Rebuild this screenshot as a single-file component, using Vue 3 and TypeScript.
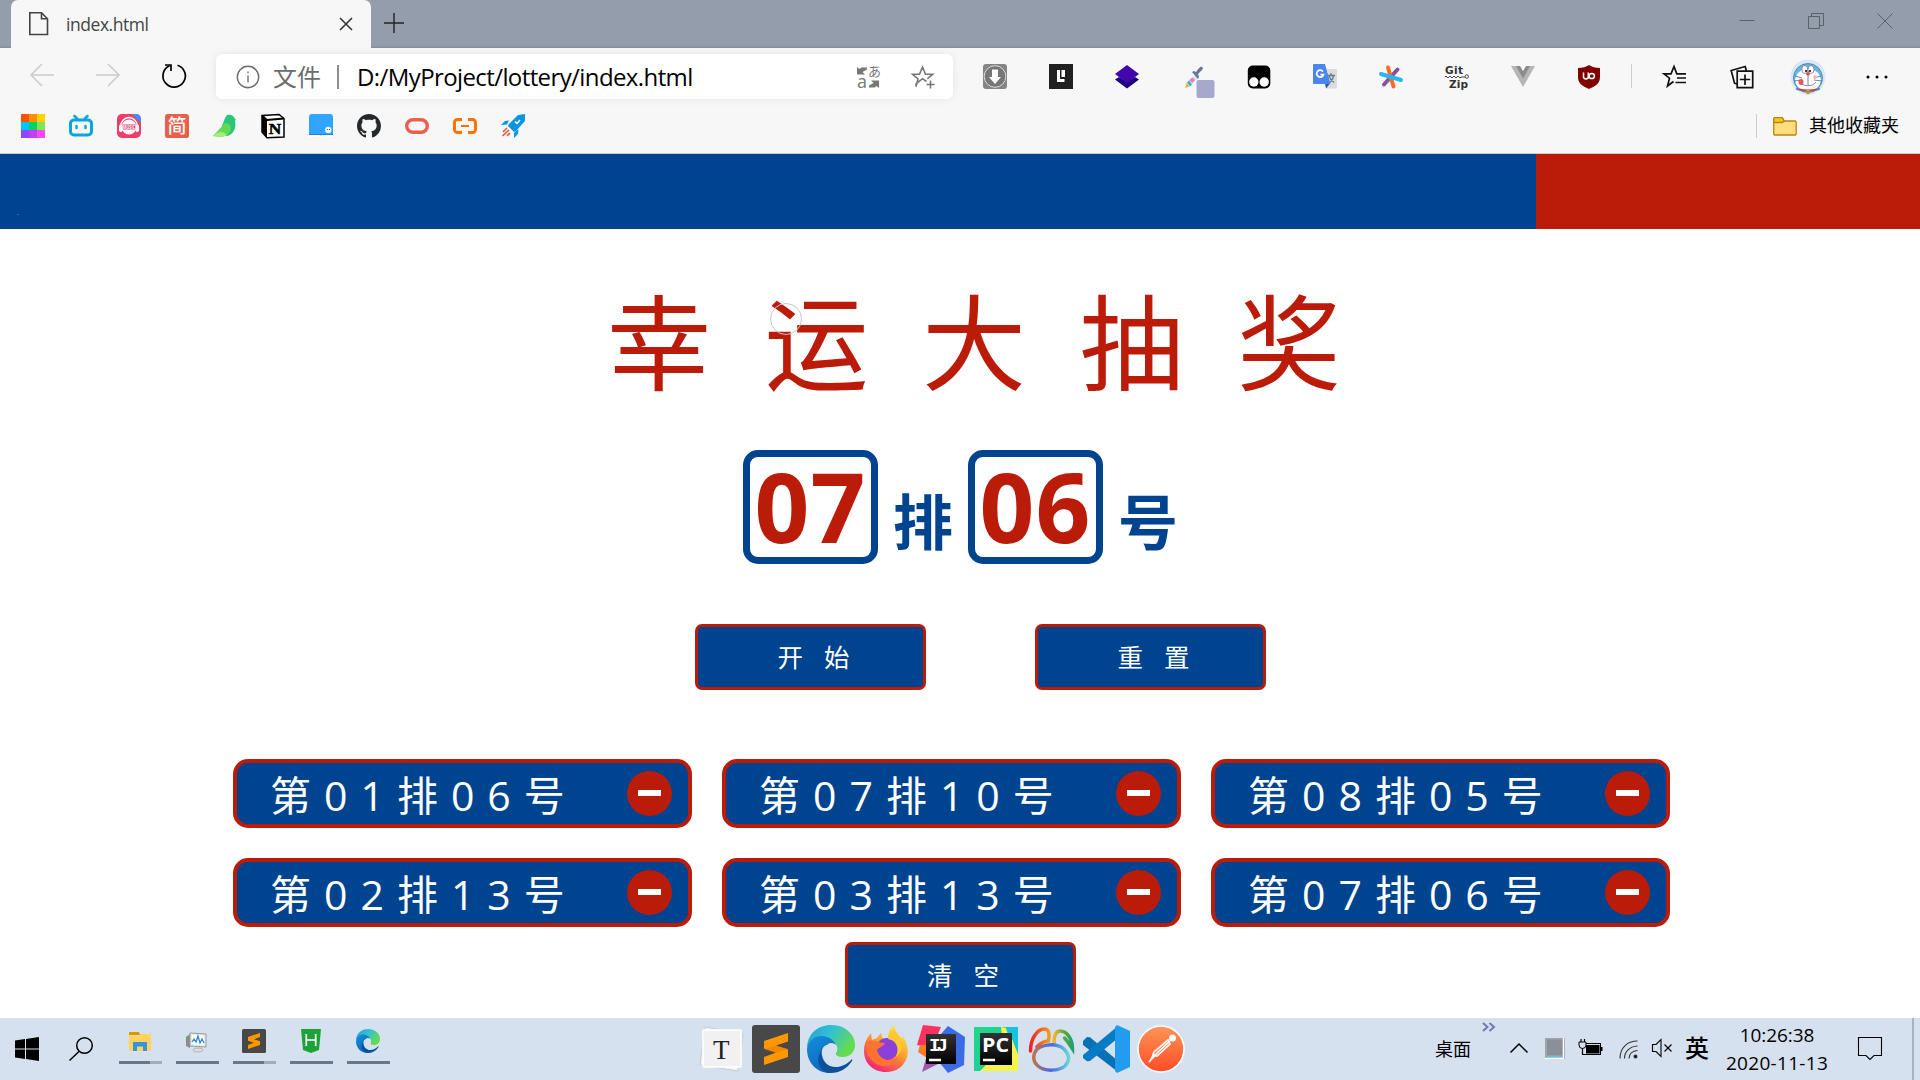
<script setup lang="ts">
import { ref } from 'vue'

interface Seat {
  row: string
  num: string
}

const row = ref('07')
const num = ref('06')
const winners = ref<Seat[]>([
  { row: '01', num: '06' },
  { row: '07', num: '10' },
  { row: '08', num: '05' },
  { row: '02', num: '13' },
  { row: '03', num: '13' },
  { row: '07', num: '06' },
])

const remove = (i: number) => winners.value.splice(i, 1)
const clear = () => (winners.value = [])
</script>

<template>
  <div class="screen">
    <header class="tabs">
      <div class="tab">
        <svg class="tab-doc" width="22" height="26" viewBox="0 0 22 26" fill="none" stroke="#444" stroke-width="1.6"><path d="M1.8 1.8h11.7l6 6v15.7H1.8z" /><path d="M13.5 1.8v6h6" /></svg>
        <span class="tab-name">index.html</span>
        <svg width="14" height="14" viewBox="0 0 14 14" stroke="#333" stroke-width="1.6"><path d="M1 1l12 12M13 1L1 13" /></svg>
      </div>
      <svg class="plus" width="20" height="20" viewBox="0 0 20 20" stroke="#222" stroke-width="1.4"><path d="M10 0v20M0 10h20" /></svg>
      <div class="winctl">
        <svg width="16" height="16" viewBox="0 0 16 16" stroke="#596069" fill="none"><path d="M.5 7.5h15" /></svg>
        <svg width="16" height="16" viewBox="0 0 16 16" stroke="#596069" fill="none"><path d="M.5 3.500h11v12H.5zM3.500 3.500v-3h12v12h-4" /></svg>
        <svg width="16" height="16" viewBox="0 0 16 16" stroke="#596069" fill="none"><path d="M.5 .5l15 15M15.500 .5l-15 15" /></svg>
      </div>
    </header>

    <div class="toolbar">
      <div class="navs">
        <svg width="24" height="24" viewBox="0 0 24 24" stroke="#ccc" stroke-width="1.5" fill="none"><path d="M24 12H1M12 1L1 12l11 11" /></svg>
        <svg width="24" height="24" viewBox="0 0 24 24" stroke="#ccc" stroke-width="1.5" fill="none"><path d="M0 12h23M12 1l11 11-11 11" /></svg>
        <svg class="reload" width="26" height="26" viewBox="0 0 26 26" stroke="#000" stroke-width="1.700" fill="none"><path d="M16.500 2.200a11.200 11.200 0 1 1-8 .5" /><path d="M4 2h6v6" /></svg>
      </div>
      <div class="address">
        <svg class="info" width="24" height="24" viewBox="0 0 24 24" stroke="#6c6c6c" stroke-width="1.4" fill="none"><circle cx="12" cy="12" r="10.700" /><path d="M12 10.500v7M12 6.500v1.700" /></svg>
        <span class="scheme">文件</span>
        <i class="bar"></i>
        <span class="url">D:/MyProject/lottery/index.html</span>
        <svg class="trans" width="24" height="26" viewBox="0 0 24 26" fill="#777"><text x="11" y="12" font-size="13" font-family="Noto Sans CJK SC, sans-serif">あ</text><text x="0" y="24" font-size="18" font-family="Open Sans, sans-serif">a</text><path d="M0 3l2.500 2 2-1.500H10v2L5.500 8 8 10.500H0zM22 24l-2.500-2-2 1.500H12v-2l4.500-2.500L14 16.500h8z" /></svg>
        <svg class="star" width="24" height="24" viewBox="0 0 24 24" fill="none" stroke="#777" stroke-width="1.6"><path d="M15.500 16.500l-4-2.800-6.500 5.300L5 21.500l2-7.500L1.500 9.200h7L11.500 2l3 7.200h7.200l-5.400 4.600M19.500 15.500v8M15.500 19.500h8" /></svg>
      </div>
      <div class="exts">
        <span><svg width="24" height="25" viewBox="0 0 24 25"><rect width="24" height="25" rx="3" fill="#858585" /><circle cx="12" cy="12.500" r="10.800" fill="#777" stroke="#ddd" /><path d="M9 5.500h6V13h3l-6 7-6-7h3z" fill="#fff" /></svg></span>
        <span><svg width="24" height="25" viewBox="0 0 24 25"><rect width="24" height="25" fill="#202020" /><path d="M8 6h3v9h4.500v3H8zM12.500 6H16v7h-3.500z" fill="#fff" /></svg></span>
        <span><svg width="24" height="24" viewBox="0 0 24 24"><path d="M0 14.500L4 12l8 5 8-5 4 2.500-12 9z" fill="#1d0080" /><path d="M12 0l12 9-12 9L0 9z" fill="#4306ac" /></svg></span>
        <span><svg class="dropper" width="30" height="31" viewBox="0 0 30 31"><path d="M1 20l2-6 7-6 3 3-7 7z" fill="#dde1e8" /><path d="M2 15.500l2-2 3 4-2 2z" fill="#30b7c9" /><path d="M4.500 13l3-2.500 2.500 2.500-3 3z" fill="#e67bbd" /><path d="M0 21l1.500-5 3 3.500z" fill="#ffac3e" /><path d="M7 5l2-1 2 1 3-4c3-3 5 0 3 2l-4 4 1 3-1 2z" fill="#637b92" /><rect x="11.500" y="13" width="18" height="18" rx="2" fill="#a5a9cc" /></svg></span>
        <span><svg width="24" height="24" viewBox="0 0 24 24"><rect x=".8" y=".5" width="22.500" height="23" rx="5" fill="#000" /><circle cx="6.800" cy="17" r="4.700" fill="#fff" /><circle cx="17.200" cy="17" r="4.700" fill="#fff" /></svg></span>
        <span><svg width="24" height="25" viewBox="0 0 24 25"><path d="M12 5h12v19.500H14z" fill="#dcdcdc" /><path d="M14 11.500h8M18 9v2.500M20.500 12c-1 4-3 6-5 7M16 12c1 3 3 5 5 6.500" stroke="#667b83" fill="none" stroke-width="1.300" /><path d="M12 19.500h5l-4 5z" fill="#3350b5" /><path d="M1 0h11l5.500 20H1a1 1 0 0 1-1-1V1a1 1 0 0 1 1-1z" fill="#4b86ef" /><path d="M10 7.500a3.500 3.500 0 1 0 .5 3.200H7.500" fill="none" stroke="#fff" stroke-width="1.700" /></svg></span>
        <span><svg width="24" height="24" viewBox="0 0 24 24" stroke-width="4" stroke-linecap="round"><path d="M5 19.500L18.500 4.500" stroke="#8a4fa3" /><path d="M9 2.500l5.500 19" stroke="#fb6a26" /><path d="M2 9l20 6" stroke="#28b6f1" /></svg></span>
        <span><svg width="24" height="26" viewBox="0 0 24 26" fill="#333"><text x="0" y="9.500" font-size="10.500" font-weight="700" font-family="DejaVu Sans, sans-serif" textLength="18">Git</text><path d="M0 13q1-2 2 0t2 0 2 0 2 0 2 0 2 0 2 0 2 0h4" fill="none" stroke="#444" /><circle cx="21.800" cy="12.500" r="1.700" fill="none" stroke="#444" /><text x="4" y="23.500" font-size="10.500" font-weight="700" font-family="DejaVu Sans, sans-serif" textLength="19">Zip</text></svg></span>
        <span><svg width="24" height="22" viewBox="0 0 24 22"><path d="M0 0h24L12 21z" fill="#b6b6b6" /><path d="M5 0h14l-7 12.500z" fill="#8c8c8c" /><path d="M9 0h6l-3 5z" fill="#f7f7f7" /></svg></span>
        <span><svg width="22" height="24" viewBox="0 0 22 24"><path d="M11 0c3 2 6 3 11 3v9c0 6-4 9-11 12C4 21 0 18 0 12V3c5 0 8-1 11-3z" fill="#800000" /><path d="M5.500 7.500v4a2.400 2.400 0 0 0 4.800 0v-4M10.300 13.800v-6" fill="none" stroke="#fff" stroke-width="1.500" /><circle cx="13.800" cy="11" r="2.600" fill="none" stroke="#fff" stroke-width="1.500" /></svg></span>
      </div>
      <i class="sep"></i>
      <div class="tools">
        <span><svg width="24" height="24" viewBox="0 0 24 24" fill="none" stroke="#111" stroke-width="1.700"><path d="M10.500 16.500L4.500 21l2-7.800L1 8.800h7L11 1.500l2.800 7.300H23M14 13h9M12.500 17.500H23" /></svg></span>
        <span><svg width="24" height="24" viewBox="0 0 24 24" fill="none" stroke="#111" stroke-width="1.700"><path d="M7.200 6.200h15.500v16.500H7.200zM15 9.500v10.500M9.800 14.500h10.400M7 19l-2.500-.8L1.200 5.500l14-4 1.200 4.500" /></svg></span>
        <span><svg width="36" height="36" viewBox="0 0 36 36"><circle cx="18" cy="18" r="17.500" fill="#d8e8fa" /><path d="M7 31l2-3M29 31l-2-3" stroke="#3b8ed0" stroke-width="3" /><circle cx="18" cy="19" r="14.500" fill="#65b7e5" stroke="#49799b" stroke-width=".8" /><ellipse cx="18" cy="21" rx="12.800" ry="11" fill="#fff" /><ellipse cx="14.800" cy="10.500" rx="3" ry="4" fill="#fff" stroke="#667" stroke-width=".7" /><ellipse cx="21" cy="10.500" rx="3" ry="4" fill="#fff" stroke="#667" stroke-width=".7" /><circle cx="16" cy="12" r="1" /><circle cx="20" cy="12" r="1" /><circle cx="18" cy="15" r="1.800" fill="#d94150" /><path d="M18 17v9M10 23c3 5 13 5 16 0M5 17l7 2M4 22l8-1M31 17l-7 2M32 22l-8-1" stroke="#567" stroke-width=".8" fill="none" /><ellipse cx="11" cy="23" rx="2.500" ry="3" fill="#e65465" /><circle cx="25" cy="18" r="2" fill="#f5b7c4" /><path d="M9 30.500q9 2 18 0" stroke="#cf3e4d" stroke-width="2" fill="none" /><circle cx="18" cy="33" r="2.300" fill="#b69745" /></svg></span>
        <span class="dots"><svg width="24" height="4" viewBox="0 0 24 4"><circle cx="3" cy="2" r="1.500" /><circle cx="12" cy="2" r="1.500" /><circle cx="21" cy="2" r="1.500" /></svg></span>
      </div>
    </div>

    <div class="bookmarks">
      <div class="marks">
        <svg viewBox="0 0 24 24"><path d="M0 0h8v8H0z" fill="#ff5200" /><path d="M8 0h8v8H8z" fill="#ff9100" /><path d="M16 0h8v8h-8z" fill="#ffd200" /><path d="M0 8h8v8H0z" fill="#00c3ff" /><path d="M8 8h8v8H8z" fill="#00d364" /><path d="M16 8h8v8h-8z" fill="#80e550" /><path d="M0 16h8v8H0z" fill="#8b49ff" /><path d="M8 16h8v8H8z" fill="#c63bf8" /><path d="M16 16h8v8h-8z" fill="#ff45f8" /></svg>
        <svg viewBox="0 0 24 24" fill="none" stroke="#08a5df" stroke-linecap="round"><rect x="1.500" y="6" width="21" height="15" rx="3.500" stroke-width="3" /><path d="M5.500 2l3 3M18.500 2l-3 3" stroke-width="2.500" /><path d="M7.500 12v2M16.500 12v2" stroke-width="2.500" /></svg>
        <svg viewBox="0 0 24 24"><rect width="24" height="24" rx="5" fill="#ee3d69" /><path d="M15 0h4a5 5 0 0 1 5 5v4z" fill="#3c92ee" /><circle cx="12" cy="13" r="7.500" fill="#fff" /><path d="M3.500 13a8.500 9.500 0 0 1 17 0" fill="none" stroke="#fff" stroke-width="1.300" /><path d="M5.500 10.500h13v5h-13z" fill="#ee3d69" /><rect x="2" y="10.500" width="3.500" height="7.500" rx="1.700" fill="#fff" /><rect x="18.500" y="10.500" width="3.500" height="7.500" rx="1.700" fill="#fff" /><text x="6" y="14.800" font-size="4.600" font-weight="700" font-family="Open Sans, sans-serif" fill="#fff" textLength="12" lengthAdjust="spacingAndGlyphs">MUSIC</text></svg>
        <svg viewBox="0 0 24 24"><rect width="24" height="24" rx="2.500" fill="#e8604b" /><text x="2.500" y="19" font-size="19" font-weight="500" font-family="Noto Sans CJK SC, sans-serif" fill="#fff">简</text></svg>
        <svg viewBox="0 0 24 24"><path d="M12 4l2-3c4-1 7 1 8 4h1l-1 2c2 8-3 15-9 15L9 12z" fill="#2bc779" /><path d="M0 22L12 9c7 1 7 7 4 10-4 5-10 4-16 3z" fill="#62d957" /><path d="M0 22c5-4 8-6 14-1-4 2-8 2-14 1z" fill="#a6ec72" /></svg>
        <svg viewBox="0 0 24 24"><path d="M1 1.500L18 .5l5 4V23l-17 .8L1 18z" fill="#fff" stroke="#000" stroke-width="1.500" /><path d="M1 1.500L6 6v17.500L1 18z" fill="#000" /><path d="M1 1.500L6 6l17-1.500" fill="none" stroke="#000" stroke-width="1.800" /><text x="7.800" y="20.300" font-size="15.500" font-weight="700" font-family="Liberation Serif, serif" textLength="12.500" lengthAdjust="spacingAndGlyphs" stroke="#000" stroke-width=".5">N</text></svg>
        <svg viewBox="0 0 24 24"><path d="M3 0h18a3 3 0 0 1 3 3v18H0V3a3 3 0 0 1 3-3z" fill="#30a4ff" /><path d="M0 20h24v1H13l-1 1-1-1H0z" fill="#1384ec" /><path d="M0 21h11l1 1 1-1h11v2H0z" fill="#fff" /><circle cx="19.300" cy="16" r="3.200" fill="#e6f5ff" /><path d="M18 15.500h1M20 15.500h1" stroke="#276da9" /></svg>
        <svg viewBox="0 0 16 16" fill="#24292e"><path d="M8 0C3.580 0 0 3.580 0 8c0 3.540 2.290 6.530 5.470 7.590.4.070.55-.17.55-.38 0-.19-.01-.82-.01-1.490-2.010.37-2.530-.49-2.690-.94-.09-.23-.48-.94-.82-1.130-.28-.15-.68-.52-.01-.53.63-.01 1.080.58 1.230.82.72 1.210 1.870.87 2.330.66.070-.52.28-.87.51-1.070-1.780-.2-3.640-.89-3.640-3.950 0-.87.31-1.590.82-2.150-.08-.2-.36-1.020.08-2.120 0 0 .67-.21 2.200.82.64-.18 1.320-.27 2-.27s1.360.09 2 .27c1.530-1.040 2.200-.82 2.200-.82.44 1.100.16 1.920.08 2.120.51.56.82 1.270.82 2.150 0 3.070-1.870 3.750-3.650 3.950.29.25.54.73.54 1.480 0 1.070-.01 1.930-.01 2.200 0 .21.15.46.55.38A8.010 8.010 0 0 0 16 8c0-4.420-3.580-8-8-8z" /></svg>
        <svg viewBox="0 0 24 24"><rect x="1.700" y="5.700" width="20.600" height="12.600" rx="6.300" fill="none" stroke="#ee5c4b" stroke-width="3.400" /></svg>
        <svg viewBox="0 0 24 24" fill="none" stroke="#ff7200" stroke-width="3"><path d="M9 5.500H4.500a3 3 0 0 0-3 3v7a3 3 0 0 0 3 3H9M15 5.500h4.500a3 3 0 0 1 3 3v7a3 3 0 0 1-3 3H15" /><path d="M8 12h8" stroke-width="2" /></svg>
        <svg viewBox="0 0 24 24"><path d="M24 0v7l-9 10-2 1-6-6 1-2 9-9z" fill="#0a96dd" /><path d="M0 11l4-4 4-.5-2 4zM13 24l4-4 .5-5-4.500 4z" fill="#0a96dd" /><path d="M14 7.500l2 2 3-3.500" fill="none" stroke="#fff" stroke-width="1.500" /><path d="M2 18l4-4M1.500 22l6.500-6M6 22l3-3" stroke="#f25335" stroke-width="1.600" /></svg>
      </div>
      <div class="other">
        <svg width="24" height="19" viewBox="0 0 24 19" stroke="#b8860b" stroke-width="1.300"><path d="M.7 17V2.200A1.500 1.500 0 0 1 2.200.7h7l2 3.300h10.500a1.500 1.500 0 0 1 1.500 1.500V17a1 1 0 0 1-1 1H1.700a1 1 0 0 1-1-1z" fill="#ffdd7d" /><path d="M.7 5.500V2.200A1.500 1.500 0 0 1 2.200.7h7l2 3.300-2 1.500z" fill="#f9c429" /></svg>
        <span>其他收藏夹</span>
      </div>
    </div>

    <main class="page">
      <div class="banner"><i class="speck"></i></div>
      <h1 class="title">幸运大抽奖<i class="ring"></i></h1>
      <div class="draw">
        <b class="box">{{ row }}</b><b class="unit">排</b><b class="box">{{ num }}</b><b class="unit">号</b>
      </div>
      <div class="actions">
        <button>开始</button>
        <button>重置</button>
      </div>
      <ul class="winners">
        <li v-for="(w, i) in winners" :key="i">
          <span>第{{ w.row }}排{{ w.num }}号</span>
          <i class="del" @click="remove(i)"></i>
        </li>
      </ul>
      <button class="clear" @click="clear">清空</button>
    </main>

    <footer class="taskbar">
      <svg class="win" width="24" height="24" viewBox="0 0 24 24"><path d="M0 3.500L10 2v9.500H0zM11 1.900L24 0v11.500H11zM0 12.500h10V22L0 20.500zM11 12.500h13V24l-13-1.900z" /></svg>
      <svg class="search" width="24" height="24" viewBox="0 0 24 24" fill="none" stroke="#000" stroke-width="1.500"><circle cx="15.500" cy="8.500" r="7.800" /><path d="M10 14.500L.5 23.500" /></svg>
      <div class="running">
        <span class="multi"><svg width="24" height="24" viewBox="0 0 24 24"><path d="M1 3h10l1 3H1z" fill="#dc9500" /><path d="M1 6.500h10l2-1.500h10v17H1z" fill="#ffd35d" /><path d="M5 22v-9h14v9h-4v-4.500H9V22z" fill="#3593df" /></svg></span>
        <span><svg width="24" height="24" viewBox="0 0 24 24"><path d="M1 8l4-3v14l-4-2z" fill="#888d90" /><path d="M5 4l16 1v13L5 17z" fill="#ececec" stroke="#999" /><path d="M7 6l12 1v9L7 15z" fill="#fff" /><path d="M7 13l2-3 2 3 2-6 2 7 2-4 2 4" stroke="#2f8cd1" stroke-width="1.300" fill="none" /><ellipse cx="13" cy="21" rx="5" ry="2" fill="#ddd" stroke="#999" stroke-width=".6" /><path d="M1.500 9h2" stroke="#48bd27" stroke-width="2" /></svg></span>
        <span class="multi"><svg width="24" height="24" viewBox="0 0 48 48"><rect width="48" height="48" rx="3" fill="#484848" /><path d="M12 16l24-8v8l-12 4.500 12 4v7.500l-24 8v-8l12-4.500-12-4z" fill="#ff9800" /></svg></span>
        <span><svg width="24" height="24" viewBox="0 0 24 24"><path d="M2 0h20l-2 21-8 3-8-3z" fill="#1da239" /><path d="M7.300 5v12M16.700 5v12M7.300 11h9.400" stroke="#fff" stroke-width="1.700" /></svg></span>
        <span><svg width="24" height="24" viewBox="0 0 48 48"><use href="#edge" /></svg></span>
      </div>
      <div class="dock">
        <svg viewBox="0 0 48 48"><path d="M8 2l38 7-5 37-38-6z" fill="#f3f3f3" stroke="#c5cbd0" /><rect x="6" y="5" width="38" height="37" rx="1" fill="#f1f1f1" stroke="#fff" stroke-width="1.500" /><text x="16" y="34" font-size="27" font-family="Liberation Serif, serif" fill="#222">T</text></svg>
        <svg viewBox="0 0 48 48"><rect width="48" height="48" rx="3" fill="#484848" /><path d="M12 16l24-8v8.500l-12 4 12 4v7.500l-24 8v-8l12-4.500-12-4z" fill="#ff9800" /><path d="M12 24l12 4 12-4-12-3.500z" fill="#e87f00" opacity=".6" /></svg>
        <svg viewBox="0 0 48 48">
          <defs>
            <linearGradient id="eg" x1="0" y1="0" x2="1" y2=".5"><stop offset="0" stop-color="#249edc" /><stop offset=".5" stop-color="#34c1cf" /><stop offset="1" stop-color="#65dc4d" /></linearGradient>
            <linearGradient id="eb" x1="0" y1="0" x2=".5" y2="1"><stop offset="0" stop-color="#178ed8" /><stop offset="1" stop-color="#0868bf" /></linearGradient>
            <linearGradient id="ff" x1=".8" y1="0" x2=".2" y2="1"><stop offset="0" stop-color="#fff24a" /><stop offset=".45" stop-color="#ff9b2c" /><stop offset="1" stop-color="#f2147c" /></linearGradient>
            <linearGradient id="pc" x1="0" y1="0" x2="1" y2="1"><stop offset="0" stop-color="#21d789" /><stop offset="1" stop-color="#19cba0" /></linearGradient>
            <linearGradient id="pm" x1="0" y1="0" x2="0" y2="1"><stop offset="0" stop-color="#ff9556" /><stop offset="1" stop-color="#ff4c27" /></linearGradient>
            <linearGradient id="na" x1="0" y1="0" x2="1" y2="0"><stop offset="0" stop-color="#e8252a" /><stop offset="1" stop-color="#f19a1d" /></linearGradient>
            <linearGradient id="nb" x1="0" y1="0" x2="1" y2="0"><stop offset="0" stop-color="#f3b52f" /><stop offset=".6" stop-color="#4ca83c" /><stop offset="1" stop-color="#259e72" /></linearGradient>
            <linearGradient id="nc" x1="0" y1="0" x2="1" y2="0"><stop offset="0" stop-color="#bd744b" /><stop offset=".5" stop-color="#4668ef" /><stop offset="1" stop-color="#67d6d5" /></linearGradient>
            <linearGradient id="bk" x1="0" y1="0" x2="0" y2="1"><stop offset="0" stop-color="#333" /><stop offset="1" stop-color="#000" /></linearGradient>
            <g id="edge">
              <path d="M0 24C0 6 14 0 24 0c16 0 24 11 24 20 0 8-6 12-12 12-5 0-8-2-7-4 4-7-2-12-8-12C9 12 1 16 0 24z" fill="url(#eg)" />
              <path d="M0 24c1-9 8-13 14-13 8 0 15 5 15 11-8-6-16 0-14 8 2 10 10 13 15 13l-7 5C10 48 0 38 0 24z" fill="url(#eb)" />
              <path d="M20 17c-8 5-8 20 3 24 8 3 16-1 21-6 1-1 2 0 1 1-5 8-13 12-21 12-12-1-15-12-11-20 1-5 4-9 7-11z" fill="#104f9b" />
              <path d="M29 28c3-4 1-10-5-10-4 0-6 5-4 10 1 3 3 5 6 6 3 1 7 1 10 0-5 0-8-3-7-6z" fill="#d5e1ee" />
            </g>
          </defs>
          <use href="#edge" />
        </svg>
        <svg viewBox="0 0 48 48"><path d="M2 26C2 18 5 13 9 8l1 7 5-2 4-5 2 6 5 1c0-7 2-12 6-15 1 7 5 10 8 14l1-3c4 7 6 15 4 21-3 10-11 15-21 15C11 47 2 38 2 26z" fill="url(#ff)" /><circle cx="25" cy="24" r="11" fill="#8d3fd9" /><path d="M4 18c5-5 11 0 19 0-2 4-6 4-8 7 2 10 14 13 21 7-3 9-15 12-23 6C5 33 4 25 4 18z" fill="#ff722f" /><path d="M26 14c8 1 12 9 8 18 7-5 8-14 4-20l-6-7c-3 2-5 5-6 9z" fill="#ffc832" /></svg>
        <svg viewBox="0 0 48 48"><path d="M6 0l18 2-9 21-15-3z" fill="#ff315e" /><path d="M24 9l7-8 17 11-1 28-16 8-9-11z" fill="#3b6ce5" /><path d="M3 20l10 0v15L1 27z" fill="#f67b28" /><path d="M10 30L5 47l18-9z" fill="#a556aa" /><rect x="9" y="9" width="30" height="30" fill="url(#bk)" /><text x="12" y="26" font-size="19" font-weight="700" font-family="Liberation Mono, monospace" fill="#fff" textLength="19">IJ</text><path d="M12 35h12" stroke="#fff" stroke-width="2.500" /></svg>
        <svg viewBox="0 0 48 48"><rect x="2" y="2" width="44" height="44" fill="url(#pc)" /><path d="M36 2h10v32L30 12z" fill="#12c4dd" /><path d="M29 2l5 1 4 13-8-4zM40 14l6 15v17H8l8-8z" fill="#f4f44c" /><rect x="8" y="8" width="32" height="32" fill="url(#bk)" /><text x="10" y="27" font-size="20" font-weight="700" font-family="Open Sans, sans-serif" fill="#fff" textLength="27" lengthAdjust="spacingAndGlyphs">PC</text><path d="M11 35h12" stroke="#fff" stroke-width="2.500" /></svg>
        <svg viewBox="0 0 48 48" fill="none" stroke-width="3.500" stroke-linecap="round"><path d="M3.500 26C3.500 14 10 4 17.500 4c4.500 0 5.500 5 4 12-5 0-8 2-11.500 6" stroke="url(#na)" /><path d="M27 18c0-7 2-12 6-12 7 0 12.500 8 12.500 18-2-3-5-8-8-11" stroke="url(#nb)" /><path d="M10 24c7-5 20-6 27 0 6 6 6 12 1 17-6 5-20 6-27 0-6-5-5-12-1-17z" stroke="url(#nc)" /></svg>
        <svg viewBox="0 0 48 48"><path d="M1 16l4-4 3 .3L36 36v11L1 20z" fill="#0870b7" /><path d="M1 30L36 1v12L8 36l-3 .2L1 33z" fill="#087bc5" /><path d="M35 0l13 6v36l-13 6-2-2V2z" fill="#229cef" /></svg>
        <svg viewBox="0 0 48 48"><circle cx="24" cy="24" r="23" fill="url(#pm)" stroke="#fff" stroke-width="1.600" /><circle cx="35.500" cy="13" r="3.500" fill="#fff" /><path d="M33 16L20 28l-8 9M31 15L17 27l-1 3 4 1 13-12z" stroke="#fff" stroke-width="1.700" fill="none" /><path d="M16 29l3 2-8 7z" fill="#fff" /></svg>
      </div>
      <div class="tray">
        <span class="desk">桌面</span>
        <svg class="more" width="14" height="10" viewBox="0 0 14 10" fill="none" stroke="#7478b4" stroke-width="2"><path d="M1 1l4.500 4L1 9M7.500 1L12 5 7.500 9" /></svg>
        <svg class="up" width="18" height="10" viewBox="0 0 18 10" fill="none" stroke="#000" stroke-width="1.500"><path d="M.5 9.500L9 1l8.500 8.500" /></svg>
        <svg class="pad" width="20" height="21" viewBox="0 0 20 21"><rect width="20" height="21" fill="#a1a5ab" /><rect x="2" y="1.500" width="15" height="16" fill="#8b9098" /><path d="M2 18.500h15" stroke="#5fc0f2" stroke-width="1.500" /><path d="M0 20.300h18.500V0" stroke="#fff" stroke-width="1.300" fill="none" /></svg>
        <svg class="batt" width="24" height="17" viewBox="0 0 24 17"><rect x="3.500" y="4.500" width="18" height="11" fill="none" stroke="#000" /><rect x="7" y="6" width="13.500" height="8.500" /><path d="M22.500 8v4" stroke="#000" stroke-width="2" /><path d="M0 3h7v3a3 3 0 0 1-7 0z" fill="#d5e1ee" stroke="#000" /><path d="M2 0v3M5.500 0v3M3.500 9v6.500" stroke="#000" stroke-width="1.200" /></svg>
        <svg class="wifi" width="20" height="19" viewBox="0 0 20 19" fill="none" stroke="#333" stroke-width="1.100"><path d="M1 18.500C1 8 8 1 18.500 1M5.500 18.500c0-7 5-12 13-12.500M10 18.500C10 14 13.500 11 18.500 10.500" /><circle cx="16.500" cy="16.500" r="1.500" fill="#000" /></svg>
        <svg class="vol" width="20" height="18" viewBox="0 0 20 18" fill="none" stroke="#000" stroke-width="1.100"><path d="M.5 5.500h3.500l5-5v17l-5-5H.5zM12.500 5.500l7 7M19.500 5.500l-7 7" /></svg>
        <span class="lang">英</span>
        <div class="clock"><span>10:26:38</span><span class="date">2020-11-13</span></div>
        <svg class="note" width="25" height="24" viewBox="0 0 25 24" fill="none" stroke="#000" stroke-width="1.100"><path d="M.5 .5h23v18h-7.500l-4 4-4-4H.5z" /></svg>
        <i class="edge-line"></i>
      </div>
    </footer>
  </div>
</template>

<style>
body { margin: 0; overflow: hidden; }
</style>

<style scoped>
.screen { width: 1920px; height: 1080px; display: flex; flex-direction: column; background: #fff; overflow: hidden; font-family: "Open Sans", "Noto Sans CJK SC", sans-serif; color: #000; }
.screen * { box-sizing: border-box; }
svg { display: block; flex: none; overflow: visible; }
i { display: block; }

.tabs { height: 48px; flex: none; display: flex; background: #949dac; box-shadow: inset 0 -2px 2px -1px #838b9a; }
.tab { width: 360px; height: 48px; margin-left: 11px; border-radius: 7px 7px 0 0; background: #f7f7f7; display: flex; align-items: center; padding: 0 18px 0 17px; }
.tab-name { flex: 1; margin-left: 16px; font-size: 17.500px; line-height: 24px; margin-top: -1px; color: #444; letter-spacing: -.45px; white-space: nowrap; }
.plus { margin: 13px 0 0 13px; }
.winctl { margin: 13px 27px 0 auto; display: flex; gap: 53px; }

.toolbar { height: 58px; flex: none; display: flex; background: #f7f7f7; }
.navs { width: 216px; display: flex; gap: 42px; padding: 15px 0 0 30px; }
.reload { margin-left: -1px; }
.address { width: 737px; height: 45px; margin-top: 6px; border-radius: 6px; background: #fff; box-shadow: 0 0 8px rgba(0, 0, 0, .08); display: flex; align-items: center; padding-left: 20px; }
.scheme { margin-left: 13px; width: 48px; font-size: 24px; line-height: 36px; color: #6c6c6c; }
.bar { width: 2px; height: 24px; margin-left: 16px; background: #8c8c8c; }
.url { margin-left: 18px; width: 500px; font-size: 24px; line-height: 36px; letter-spacing: -.6px; white-space: nowrap; }
.star { margin-left: 30px; }
.exts { display: flex; margin-left: 9px; height: 58px; }
.exts span { width: 66px; height: 57px; display: flex; align-items: center; justify-content: center; }
.dropper { margin: 12px 0 0 13px; }
.sep { width: 1px; height: 24px; margin: 16px 0 0 9px; background: #ccc; }
.tools { display: flex; margin-left: 10px; }
.tools span { width: 66.500px; height: 57px; display: flex; align-items: center; justify-content: center; }
.tools .dots { width: 70px; }

.bookmarks { height: 48px; flex: none; display: flex; justify-content: space-between; background: #f7f7f7; border-bottom: 1px solid #ccc; }
.marks { display: flex; gap: 24px; padding: 8px 0 0 21px; }
.marks svg { width: 24px; height: 24px; }
.other { display: flex; align-items: center; gap: 12px; height: 24px; margin: 8px 21px 0 0; padding-left: 16px; border-left: 1px solid #ccc; font-size: 18px; }
.other span { line-height: 24px; margin-top: -2px; }

.page { height: 864px; flex: none; display: flex; flex-direction: column; align-items: center; }
.banner { width: 100%; height: 75px; flex: none; background: linear-gradient(90deg, #004490 80%, #bb1b09 80%); }
.speck { width: 2px; height: 1px; margin: 60px 0 0 17px; background: #3a6ca8; }
.title { position: relative; margin: 54px 0 0 82px; height: 120px; width: 788px; font-size: 104px; font-weight: 400; line-height: 120px; letter-spacing: 53.500px; color: #bb1b09; white-space: nowrap; }
.ring { position: absolute; left: 163px; top: 20px; width: 32px; height: 32px; border: 1px solid #c8c4d4; border-radius: 50%; }
.draw { display: flex; align-items: flex-start; margin: 47px 0 0 2px; width: 436px; height: 114px; }
.box { width: 135px; height: 114px; flex: none; border: 7px solid #004490; border-radius: 15px; color: #bb1b09; font-size: 96px; line-height: 98px; text-align: center; letter-spacing: 1px; }
.unit { width: 90px; flex: none; padding-left: 15px; color: #004490; font-size: 60px; line-height: 76px; margin-top: 34px; }
.actions { display: flex; gap: 109px; margin: 60px 0 0 41px; }
button { width: 231px; height: 66px; flex: none; padding: 0 0 0 27px; border: 3px solid #bb1b09; border-radius: 7px; background: #004490; color: #fff; font-family: inherit; font-size: 25.500px; line-height: 60px; letter-spacing: 21px; }
.winners { list-style: none; margin: 69px 17px 0 0; padding: 0; display: grid; grid-template-columns: repeat(3, 459px); grid-auto-rows: 69px; gap: 30px; }
.winners li { display: flex; align-items: center; justify-content: space-between; padding: 0 16px 0 33px; border: 4px solid #bb1b09; border-radius: 15px; background: #004490; color: #fff; font-size: 41px; line-height: 60px; letter-spacing: 13px; white-space: nowrap; }
.winners span { margin-top: 2px; }
.del { width: 45px; height: 45px; border-radius: 50%; background: #bb1b09; display: flex; justify-content: center; padding-top: 19px; }
.del::before { content: ""; width: 23px; height: 6px; background: #fff; }
.clear { margin-top: 15px; }

.taskbar { position: relative; height: 62px; flex: none; display: flex; background: #d5e1ee; }
.win { margin: 19px 0 0 15px; }
.search { margin: 19px 0 0 30px; }
.running { display: flex; gap: 14px; margin-left: 26px; width: 271px; }
.running span { width: 43px; height: 46px; padding: 11px 0 0 9px; border-bottom: 3px solid #687889; }
.running .multi { border-bottom: 0; background: linear-gradient(90deg, #687889 31px, #a3adb8 31px) bottom / 100% 3px no-repeat; }
.dock { display: flex; gap: 7px; margin: 7px 0 0 307px; }
.dock svg { width: 48px; height: 48px; }
.tray { display: flex; width: 485px; margin-left: auto; }
.desk { width: 36px; margin-top: 18px; font-size: 18px; line-height: 26px; }
.more { margin: 4px 0 0 11px; }
.up { margin: 25px 0 0 14px; }
.pad { margin: 20px 0 0 17px; }
.batt { margin: 21px 0 0 14px; }
.wifi { margin: 22px 0 0 16px; }
.vol { margin: 21px 0 0 13px; }
.lang { margin: 13px 0 0 13px; width: 24px; font-size: 24px; line-height: 34px; font-weight: 500; }
.clock { margin-left: 8px; width: 120px; display: flex; flex-direction: column; text-align: center; font-size: 19px; line-height: 28px; padding-top: 3px; letter-spacing: -.1px; }
.date { letter-spacing: .3px; }
.note { margin: 19px 0 0 21px; }
.edge-line { width: 2px; height: 62px; margin-left: auto; margin-right: 6px; background: #a8b3bd; }
</style>
